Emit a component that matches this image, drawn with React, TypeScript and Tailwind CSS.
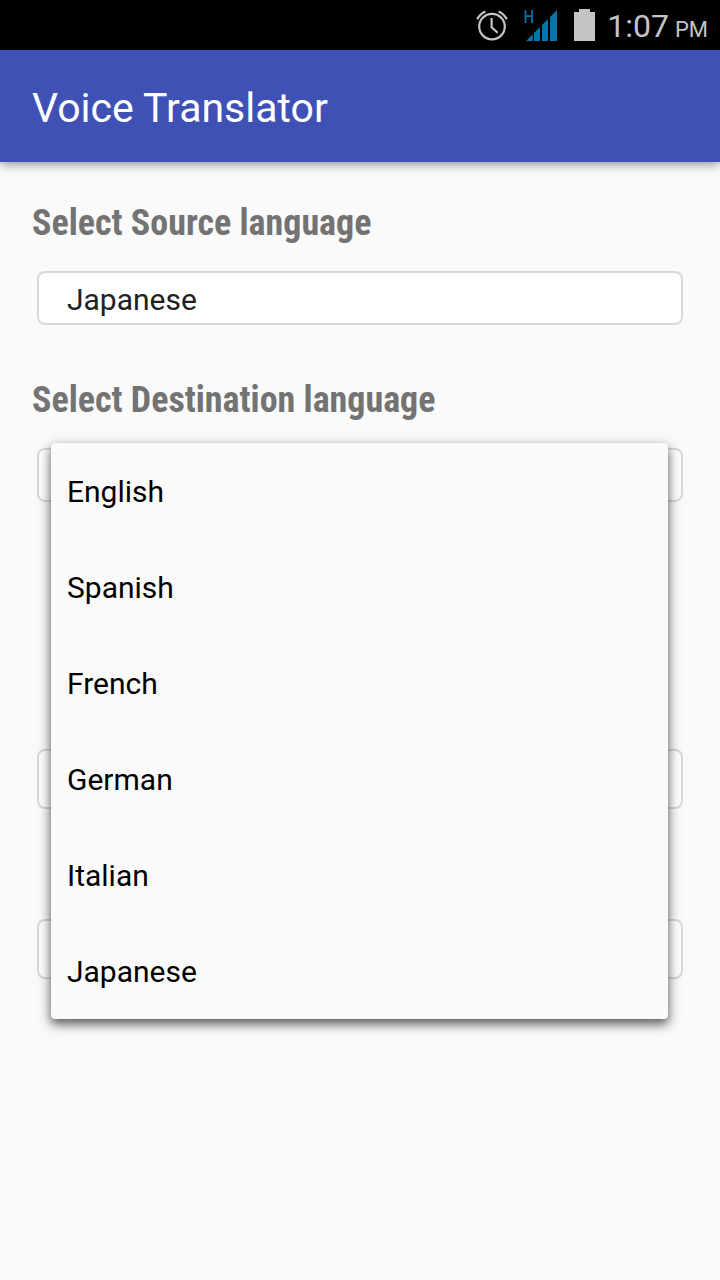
import { useState } from 'react';

const languages = ['English', 'Spanish', 'French', 'German', 'Italian', 'Japanese'];

const fieldClass =
  'block w-full appearance-none rounded-lg border-2 border-[#d9d9d9] bg-white px-7 text-3xl text-[#212121] outline-none';

function AlarmIcon() {
  return (
    <svg width="32" height="32" viewBox="0 0 32 32" fill="none" stroke="#c4c4c4" strokeWidth="2.2" aria-hidden="true">
      <circle cx="16" cy="17.6" r="12.8" />
      <path d="M15.6 9v9.2l6 5.6" />
      <path d="M1.2 10.2A17 17 0 0 1 9.4 2.4M22.6 2.4a17 17 0 0 1 8.2 7.8" />
    </svg>
  );
}

function SignalIcon() {
  return (
    <svg width="34" height="34" viewBox="0 0 34 34" fill="#0b73a8" aria-hidden="true">
      <path d="M1.5 2v13M8 2v13M1.5 8.2H8" fill="none" stroke="#0b73a8" strokeWidth="1.8" />
      <path d="M2 33l6.8-6.8V33zM10 33v-8l6-6v14zM18 33V17l6-6v22zM26 33V9l7-7v31z" />
    </svg>
  );
}

function BatteryIcon() {
  return (
    <svg width="21" height="32" viewBox="0 0 21 32" fill="#c4c4c4" aria-hidden="true">
      <path d="M5 0h11v3h5v29H0V3h5z" />
    </svg>
  );
}

function StatusBar() {
  return (
    <div className="flex h-[50px] items-center justify-end bg-black pr-3 text-[#c4c4c4]">
      <AlarmIcon />
      <div className="ml-4">
        <SignalIcon />
      </div>
      <div className="ml-4">
        <BatteryIcon />
      </div>
      <div className="ml-3 flex items-baseline gap-1.5 pt-0.5">
        <span className="text-[32px] leading-10">1:07</span>
        <span className="text-[22px]">PM</span>
      </div>
    </div>
  );
}

export default function App() {
  const [source, setSource] = useState('Japanese');
  const [destination, setDestination] = useState('English');
  const [open, setOpen] = useState(true);

  const choose = (language: string) => {
    setDestination(language);
    setOpen(false);
  };

  return (
    <div className="min-h-screen bg-[#fafafa] font-['Roboto',sans-serif]">
      <StatusBar />
      <header className="flex h-28 items-center bg-[#3f51b5] px-8 pt-1.5 shadow-[0_2px_10px_rgba(0,0,0,0.45)]">
        <h1 className="text-[41px] text-white">Voice Translator</h1>
      </header>

      <main className="px-8 pt-[37px]">
        <label
          htmlFor="source"
          className="block font-['Roboto_Condensed','Liberation_Sans_Narrow',sans-serif] text-4xl leading-12 font-bold text-[#737373]"
        >
          Select Source language
        </label>
        <div className="mt-6 px-[5px]">
          <select
            id="source"
            value={source}
            onChange={(e) => setSource(e.target.value)}
            className={`${fieldClass} h-[54px] pt-1`}
          >
            {languages.map((language) => (
              <option key={language}>{language}</option>
            ))}
          </select>
        </div>

        <label
          htmlFor="destination"
          className="mt-[51px] block font-['Roboto_Condensed','Liberation_Sans_Narrow',sans-serif] text-4xl leading-12 font-bold text-[#737373]"
        >
          Select Destination language
        </label>
        <div className="relative mt-6 px-[5px]">
          <button
            id="destination"
            type="button"
            aria-haspopup="listbox"
            aria-expanded={open}
            onClick={() => setOpen(!open)}
            className={`${fieldClass} h-[54px] text-left`}
          >
            {!open && destination}
          </button>
          {open && (
            <div
              role="listbox"
              className="absolute right-5 left-[19px] -top-[5px] z-10 rounded-sm bg-[#fafafa] shadow-[0_5px_10px_rgba(0,0,0,0.5),0_4px_16px_rgba(0,0,0,0.25)]"
            >
              {languages.map((language) => (
                <button
                  key={language}
                  type="button"
                  role="option"
                  aria-selected={language === destination}
                  onClick={() => choose(language)}
                  className="block h-24 w-full px-4 pt-0.5 text-left text-3xl text-black"
                >
                  {language}
                </button>
              ))}
            </div>
          )}
        </div>

        <div className="mt-[247px] flex flex-col gap-[110px] px-[5px]">
          <input type="text" aria-label="Source text" className={`${fieldClass} h-[60px]`} />
          <input type="text" aria-label="Translated text" className={`${fieldClass} h-[60px]`} />
        </div>
      </main>
    </div>
  );
}
